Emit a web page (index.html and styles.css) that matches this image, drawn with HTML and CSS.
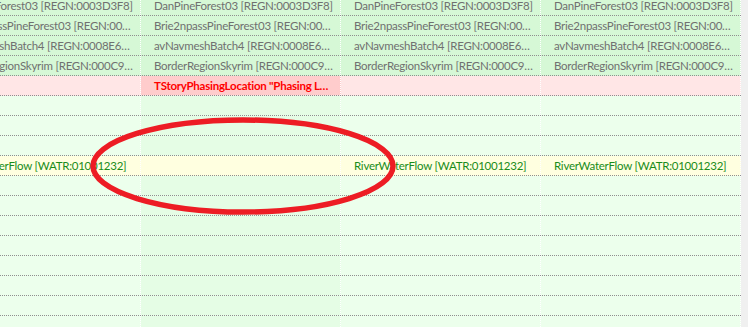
FILE: index.html
```html
<!DOCTYPE html>
<html>
<head>
<meta charset="utf-8">
<link rel="stylesheet" href="styles.css">
</head>
<body>
<div class="view">
  <div class="grid">
    <div class="row top"><div class="cell">DanPineForest03 [REGN:0003D3F8]</div><div class="cell">DanPineForest03 [REGN:0003D3F8]</div><div class="cell">DanPineForest03 [REGN:0003D3F8]</div><div class="cell">DanPineForest03 [REGN:0003D3F8]</div></div>
    <div class="row top"><div class="cell">Brie2npassPineForest03 [REGN:0003D3F9]</div><div class="cell">Brie2npassPineForest03 [REGN:0003D3F9]</div><div class="cell">Brie2npassPineForest03 [REGN:0003D3F9]</div><div class="cell">Brie2npassPineForest03 [REGN:0003D3F9]</div></div>
    <div class="row top"><div class="cell">avNavmeshBatch4 [REGN:0008E6A1]</div><div class="cell">avNavmeshBatch4 [REGN:0008E6A1]</div><div class="cell">avNavmeshBatch4 [REGN:0008E6A1]</div><div class="cell">avNavmeshBatch4 [REGN:0008E6A1]</div></div>
    <div class="row top"><div class="cell">BorderRegionSkyrim [REGN:000C97EB]</div><div class="cell">BorderRegionSkyrim [REGN:000C97EB]</div><div class="cell">BorderRegionSkyrim [REGN:000C97EB]</div><div class="cell">BorderRegionSkyrim [REGN:000C97EB]</div></div>
    <div class="row pink"><div class="cell"></div><div class="cell conflict">TStoryPhasingLocation "Phasing Location"</div><div class="cell"></div><div class="cell"></div></div>
    <div class="row"><div class="cell"></div><div class="cell"></div><div class="cell"></div><div class="cell"></div></div>
    <div class="row"><div class="cell"></div><div class="cell"></div><div class="cell"></div><div class="cell"></div></div>
    <div class="row"><div class="cell"></div><div class="cell"></div><div class="cell"></div><div class="cell"></div></div>
    <div class="row yellow"><div class="cell">RiverWaterFlow [WATR:01001232]</div><div class="cell"></div><div class="cell">RiverWaterFlow [WATR:01001232]</div><div class="cell">RiverWaterFlow [WATR:01001232]</div></div>
    <div class="row"><div class="cell"></div><div class="cell"></div><div class="cell"></div><div class="cell"></div></div>
    <div class="row"><div class="cell"></div><div class="cell"></div><div class="cell"></div><div class="cell"></div></div>
    <div class="row"><div class="cell"></div><div class="cell"></div><div class="cell"></div><div class="cell"></div></div>
    <div class="row"><div class="cell"></div><div class="cell"></div><div class="cell"></div><div class="cell"></div></div>
    <div class="row"><div class="cell"></div><div class="cell"></div><div class="cell"></div><div class="cell"></div></div>
    <div class="row"><div class="cell"></div><div class="cell"></div><div class="cell"></div><div class="cell"></div></div>
    <div class="row"><div class="cell"></div><div class="cell"></div><div class="cell"></div><div class="cell"></div></div>
    <div class="row"><div class="cell"></div><div class="cell"></div><div class="cell"></div><div class="cell"></div></div>
  </div>
  <div class="scrollbar"></div>
  <svg class="mark" width="748" height="327" viewBox="0 0 748 327">
    <ellipse cx="243" cy="166" rx="150" ry="46" fill="none" stroke="#ed1c24" stroke-width="5.5"/>
  </svg>
</div>
</body>
</html>
```

FILE: styles.css
```css
html, body {
  margin: 0;
  padding: 0;
  overflow: hidden;
  background: #f0f0f0;
}
.view {
  position: relative;
  width: 748px;
  height: 327px;
  overflow: hidden;
  display: flex;
}
.grid {
  margin-left: -59px;
  margin-top: -4px;
  width: 800px;
  flex: none;
  background: #ecffec;
}
.scrollbar {
  flex: 1;
  background: #f0f0f0;
}
.row {
  display: flex;
  height: 20px;
  box-sizing: border-box;
  border-bottom: 1px dotted #8f8f8f;
  background: #ecffec;
}
.cell {
  width: 200px;
  flex: none;
  box-sizing: border-box;
  border-right: 1px dotted #ffffff;
  padding: 0 6px 0 13px;
  font-family: Lato, "Open Sans", sans-serif;
  font-size: 11.5px;
  letter-spacing: -0.25px;
  line-height: 19px;
  color: #707070;
  white-space: nowrap;
  overflow: hidden;
  text-overflow: ellipsis;
}
.row .cell:nth-child(2) {
  background: #e5fde5;
}
.row.top {
  background: #d6f8d6;
}
.row.top .cell:nth-child(2) {
  background: #d6f8d6;
}
.row.pink, .row.pink .cell:nth-child(2) {
  background: #ffe6e6;
}
.row.pink .cell.conflict {
  background: #ffcccc;
  color: #ff0000;
  font-weight: bold;
}
.row.yellow, .row.yellow .cell:nth-child(2) {
  background: #ffffe0;
}
.row.yellow .cell {
  color: #198c19;
}
.mark {
  position: absolute;
  left: 0;
  top: 0;
  pointer-events: none;
}
```
